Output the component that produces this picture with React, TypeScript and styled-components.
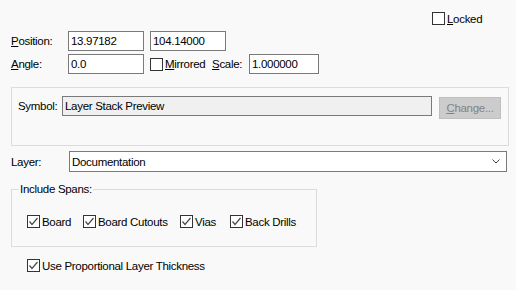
import React from "react";
import styled, { createGlobalStyle } from "styled-components";

const GlobalStyle = createGlobalStyle`
  html, body {
    margin: 0;
    padding: 0;
    background: #f9f9f9;
  }
`;

const Page = styled.div`
  width: 516px;
  height: 290px;
  box-sizing: border-box;
  padding: 12px 0 0 11px;
  background: #f9f9f9;
  font-family: "Liberation Sans", Arial, sans-serif;
  font-size: 11.5px;
  letter-spacing: -0.3px;
  color: #000;
`;

const Key = styled.span`
  text-decoration: underline;
  text-underline-offset: 1px;
`;

const TopRow = styled.div`
  display: flex;
  padding-left: 421px;
  height: 13px;
`;

const FieldRow = styled.div<{ $top: number }>`
  display: flex;
  align-items: center;
  height: 20px;
  margin-top: ${(p) => p.$top}px;
`;

const Label = styled.div<{ $w: number }>`
  width: ${(p) => p.$w}px;
  flex: none;
  white-space: nowrap;
`;

const TextBox = styled.div<{ $w: number; $h?: number; $disabled?: boolean }>`
  box-sizing: border-box;
  width: ${(p) => p.$w}px;
  height: ${(p) => p.$h ?? 20}px;
  flex: none;
  display: flex;
  align-items: center;
  padding: 0 2px;
  border: 1px solid #7a7a7a;
  background: ${(p) => (p.$disabled ? "#f0f0f0" : "#ffffff")};
  white-space: nowrap;
  overflow: hidden;
`;

const CheckItem = styled.label<{ $w?: number }>`
  display: flex;
  align-items: center;
  gap: 2px;
  height: 13px;
  white-space: nowrap;
  flex: none;
  width: ${(p) => (p.$w ? `${p.$w}px` : "auto")};
`;

const Box = styled.span`
  box-sizing: border-box;
  width: 13px;
  height: 13px;
  flex: none;
  border: 1px solid #333333;
  background: #ffffff;
  display: flex;
  align-items: center;
  justify-content: center;
`;

const Group = styled.div`
  box-sizing: border-box;
  width: 498px;
  height: 59px;
  margin-top: 13px;
  border: 1px solid #dcdcdc;
  padding: 8px 0 0 6px;
  display: flex;
  align-items: flex-start;
`;

const Button = styled.div`
  box-sizing: border-box;
  width: 62px;
  height: 22px;
  margin: 1px 0 0 7px;
  border: 1px solid #bfbfbf;
  background: #cccccc;
  color: #838383;
  display: flex;
  align-items: center;
  justify-content: center;
`;

const Select = styled(TextBox)`
  justify-content: space-between;
  padding-right: 6px;
`;

const Spans = styled.fieldset`
  box-sizing: border-box;
  width: 306px;
  margin: 10px 0 0 0;
  padding: 0;
  border: 1px solid #dcdcdc;
  min-inline-size: 0;
`;

const Legend = styled.legend`
  margin-left: 7px;
  padding: 0 1px;
  line-height: 14px;
  height: 14px;
`;

const SpanRow = styled.div`
  display: flex;
  padding: 19px 0 18px 15px;
`;

const Footer = styled.div`
  margin-top: 12px;
  padding-left: 16px;
`;

const Check = () => (
  <svg width="11" height="11" viewBox="0 0 11 11">
    <polyline
      points="1.5,5.5 4,8.5 9.5,2"
      fill="none"
      stroke="#4a4a4a"
      strokeWidth="1.2"
    />
  </svg>
);

const CheckBox = ({
  checked,
  w,
  children,
}: {
  checked?: boolean;
  w?: number;
  children: React.ReactNode;
}) => (
  <CheckItem $w={w}>
    <Box>{checked && <Check />}</Box>
    <span>{children}</span>
  </CheckItem>
);

const Chevron = () => (
  <svg width="8" height="5" viewBox="0 0 8 5">
    <polyline points="0.5,0.5 4,4 7.5,0.5" fill="none" stroke="#444" strokeWidth="1" />
  </svg>
);

const spans = [
  { name: "Board", w: 56 },
  { name: "Board Cutouts", w: 97 },
  { name: "Vias", w: 50 },
  { name: "Back Drills" },
];

export default function App() {
  return (
    <Page>
      <GlobalStyle />
      <TopRow>
        <CheckBox>
          <Key>L</Key>ocked
        </CheckBox>
      </TopRow>

      <FieldRow $top={6}>
        <Label $w={57}>
          <Key>P</Key>osition:
        </Label>
        <TextBox $w={76}>13.97182</TextBox>
        <Label $w={6} />
        <TextBox $w={76}>104.14000</TextBox>
      </FieldRow>

      <FieldRow $top={3}>
        <Label $w={57}>
          <Key>A</Key>ngle:
        </Label>
        <TextBox $w={76}>0.0</TextBox>
        <Label $w={6} />
        <CheckBox w={62}>
          <Key>M</Key>irrored
        </CheckBox>
        <Label $w={37}>
          <Key>S</Key>cale:
        </Label>
        <TextBox $w={70}>1.000000</TextBox>
      </FieldRow>

      <Group>
        <Label $w={44} style={{ lineHeight: "20px" }}>
          Symbol:
        </Label>
        <TextBox $w={370} $disabled>
          Layer Stack Preview
        </TextBox>
        <Button>
          <span>
            <Key>C</Key>hange...
          </span>
        </Button>
      </Group>

      <FieldRow $top={5} style={{ height: 21 }}>
        <Label $w={58}>Layer:</Label>
        <Select $w={438} $h={21}>
          <span>Documentation</span>
          <Chevron />
        </Select>
      </FieldRow>

      <Spans>
        <Legend>Include Spans:</Legend>
        <SpanRow>
          {spans.map((s) => (
            <CheckBox key={s.name} checked w={s.w}>
              {s.name}
            </CheckBox>
          ))}
        </SpanRow>
      </Spans>

      <Footer>
        <CheckBox checked>Use Proportional Layer Thickness</CheckBox>
      </Footer>
    </Page>
  );
}
